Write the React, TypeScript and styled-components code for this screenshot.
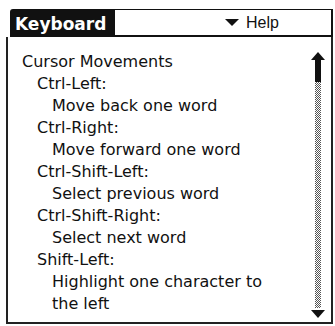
import styled, { createGlobalStyle } from 'styled-components'

const Global = createGlobalStyle`
  html, body {
    margin: 0;
    padding: 0;
    background: #fff;
  }
`

const Screen = styled.div`
  width: 335px;
  height: 326px;
  box-sizing: border-box;
  padding: 9px 0 0 6px;
  background: #fff;
  color: #111;
  overflow: hidden;
`

const Header = styled.div`
  display: flex;
  margin-left: 4px;
  width: 323px;
  height: 28px;
  box-sizing: border-box;
  border-bottom: 2px solid #111;
`

const TitleTab = styled.div`
  width: 105px;
  box-sizing: border-box;
  padding: 2px 0 0 5px;
  background: #111;
  color: #fff;
  border-top-left-radius: 3px;
  font-family: 'DejaVu Sans', sans-serif;
  font-weight: bold;
  font-size: 17px;
  line-height: 26px;
`

const MenuBox = styled.div`
  flex: 1;
  display: flex;
  align-items: center;
  padding-left: 110px;
  border-top: 1px solid #111;
  border-right: 2px solid #111;
  font-family: 'Liberation Sans', sans-serif;
  font-size: 16px;
`

const DownTri = styled.span`
  width: 0;
  height: 0;
  margin-right: 7px;
  border-left: 7px solid transparent;
  border-right: 7px solid transparent;
  border-top: 7px solid #111;
`

const Frame = styled.div`
  display: flex;
  width: 327px;
  height: 287px;
  box-sizing: border-box;
  border-left: 2px solid #222;
  border-right: 2px solid #222;
  border-bottom: 2px solid #222;
`

const TextArea = styled.div`
  flex: 1;
  padding: 14px 0 0 14px;
  font-family: 'DejaVu Sans', sans-serif;
  font-size: 16px;
  line-height: 22px;
`

const Line = styled.div<{ $level: number }>`
  padding-left: ${p => p.$level * 15}px;
  white-space: nowrap;
`

const ScrollBar = styled.div`
  width: 14px;
  margin: 15px 6px 4px 0;
  display: flex;
  flex-direction: column;
  align-items: center;
`

const Arrow = styled.div<{ $up?: boolean }>`
  width: 0;
  height: 0;
  border-left: 7px solid transparent;
  border-right: 7px solid transparent;
  ${p => (p.$up ? 'border-bottom: 8px solid #111;' : 'border-top: 8px solid #111;')}
`

const Thumb = styled.div`
  width: 6px;
  height: 22px;
  background: #111;
`

const Track = styled.div`
  width: 6px;
  flex: 1;
  margin-bottom: 2px;
  background-image: repeating-conic-gradient(#555 0 25%, #fff 0 50%);
  background-size: 2px 2px;
`

const lines: [number, string][] = [
  [0, 'Cursor Movements'],
  [1, 'Ctrl-Left:'],
  [2, 'Move back one word'],
  [1, 'Ctrl-Right:'],
  [2, 'Move forward one word'],
  [1, 'Ctrl-Shift-Left:'],
  [2, 'Select previous word'],
  [1, 'Ctrl-Shift-Right:'],
  [2, 'Select next word'],
  [1, 'Shift-Left:'],
  [2, 'Highlight one character to'],
  [2, 'the left'],
]

export default function App() {
  return (
    <>
      <Global />
      <Screen>
        <Header>
          <TitleTab>Keyboard</TitleTab>
          <MenuBox>
            <DownTri />
            Help
          </MenuBox>
        </Header>
        <Frame>
          <TextArea>
            {lines.map(([lvl, txt], i) => (
              <Line key={i} $level={lvl}>{txt}</Line>
            ))}
          </TextArea>
          <ScrollBar>
            <Arrow $up />
            <Thumb />
            <Track />
            <Arrow />
          </ScrollBar>
        </Frame>
      </Screen>
    </>
  )
}
